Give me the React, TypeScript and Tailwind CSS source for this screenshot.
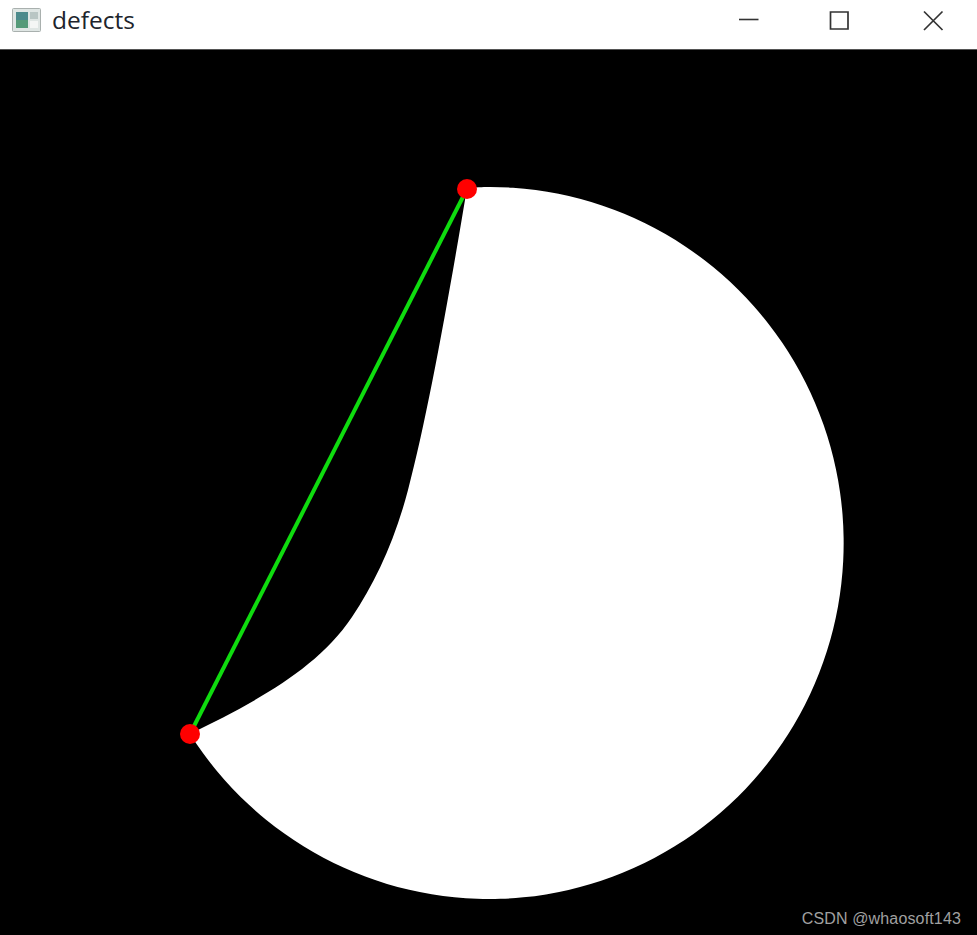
export default function App() {
  return (
    <div className="flex h-[935px] w-[977px] flex-col overflow-hidden bg-black font-['Open_Sans','Liberation_Sans',sans-serif]">
      {/* title bar */}
      <div className="flex h-[50px] shrink-0 items-start justify-between border-b border-[#555] bg-white">
        <div className="flex items-center gap-[11px] pl-[12px] pt-[7px]">
          <svg width="29" height="24" viewBox="0 0 29 24">
            <rect x="0.5" y="0.5" width="28" height="23" rx="1" fill="#dfe6e4" stroke="#a9b0ae" />
            <rect x="4" y="4" width="12" height="16" fill="#4c8a8c" />
            <rect x="4" y="12" width="12" height="8" fill="#549a78" />
            <rect x="18" y="4" width="8" height="7" fill="#b9c6c4" />
            <rect x="18" y="13" width="8" height="7" fill="#f4f6f5" />
          </svg>
          <span className="text-[24.5px] leading-[26px] text-[#20242c]">defects</span>
        </div>
        <div className="flex items-start pt-[10px]">
          <svg width="20" height="20" viewBox="0 0 20 20" className="mr-[70px]">
            <path d="M0 9.5H19.5" stroke="#333" strokeWidth="1.6" fill="none" />
          </svg>
          <svg width="20" height="20" viewBox="0 0 20 20" className="mr-[73px]">
            <path d="M1.5 2H19V19H1.5Z" stroke="#333" strokeWidth="1.7" fill="none" />
          </svg>
          <svg width="22" height="22" viewBox="0 0 22 22" className="mr-[33px]">
            <path d="M2 1.5L20.5 20M20.5 1.5L2 20" stroke="#333" strokeWidth="1.7" fill="none" />
          </svg>
        </div>
      </div>

      {/* image window */}
      <div className="relative flex-1">
        <svg width="977" height="885" viewBox="0 50 977 885" className="block">
          <path
            d="M467 188 C480 187 485 187 490 187 A354.5 356 0 1 1 190 734 C250 704 315 672 352 617 C375 583 395 540 408 490 C428 415 450 290 467 188 Z"
            fill="#fff"
          />
          <line x1="467" y1="189" x2="190" y2="734" stroke="#0fdc0f" strokeWidth="4" />
          <circle cx="467" cy="189" r="10" fill="#ff0000" />
          <circle cx="190" cy="734" r="10" fill="#ff0000" />
        </svg>
        <span className="absolute bottom-[7px] right-[16px] font-['Liberation_Sans',sans-serif] text-[16px] leading-[18px] tracking-[0.15px] text-[#a0a0a0]">
          CSDN @whaosoft143
        </span>
      </div>
    </div>
  );
}
